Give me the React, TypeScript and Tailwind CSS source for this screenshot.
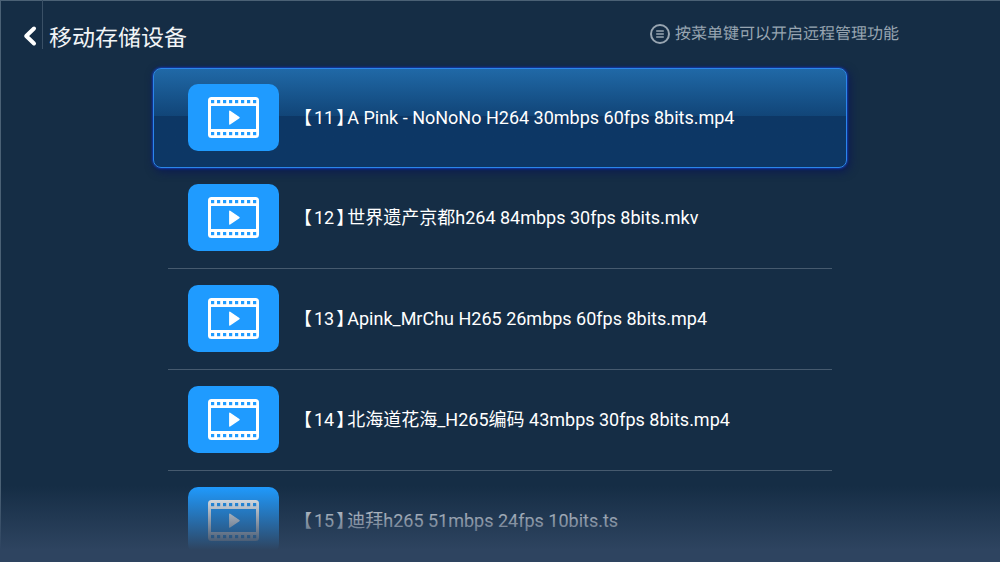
import clsx from "clsx"

const files = [
  { no: 11, name: "A Pink - NoNoNo H264 30mbps 60fps 8bits.mp4" },
  { no: 12, name: "世界遗产京都h264 84mbps 30fps 8bits.mkv" },
  { no: 13, name: "Apink_MrChu H265 26mbps 60fps 8bits.mp4" },
  { no: 14, name: "北海道花海_H265编码 43mbps 30fps 8bits.mp4" },
  { no: 15, name: "迪拜h265 51mbps 24fps 10bits.ts" },
]

const holes = [0, 1, 2, 3, 4, 5, 6, 7]

function FilmIcon() {
  return (
    <svg width="51" height="41" viewBox="0 0 51 41" aria-hidden="true">
      <rect width="51" height="41" rx="3.5" fill="#fff" />
      <rect x="3" y="9" width="45" height="23" fill="#1f9bff" />
      {holes.map((i) => (
        <g key={i} fill="#1f9bff">
          <rect x={3 + i * 6} y="3" width="3.2" height="3.2" />
          <rect x={3 + i * 6} y="35" width="3.2" height="3.2" />
        </g>
      ))}
      <path d="M21.8 14.2 31 20.6 21.8 27Z" fill="#fff" stroke="#fff" strokeWidth="1.4" strokeLinejoin="round" />
    </svg>
  )
}

function MenuIcon() {
  return (
    <svg width="20" height="20" viewBox="0 0 20 20" fill="none" stroke="currentColor" aria-hidden="true">
      <circle cx="10" cy="10" r="9" strokeWidth="2" />
      <path d="M6.2 7h7.6M6.2 10h7.6M6.2 13h7.6" strokeWidth="1.3" />
    </svg>
  )
}

export default function App() {
  return (
    <div className="relative flex h-screen flex-col overflow-hidden bg-[#152d45] font-['Roboto','Noto_Sans_CJK_SC',sans-serif] text-white shadow-[inset_1px_1px_0_#4b6175] [text-rendering:geometricPrecision]">
      <header className="flex h-[68px] shrink-0 items-start">
        <button type="button" aria-label="返回" className="mt-6 ml-[23px] h-6 w-[14px]">
          <svg width="14" height="24" viewBox="0 0 14 24" fill="none" stroke="#fff" strokeWidth="4" strokeLinejoin="round" strokeLinecap="round" aria-hidden="true">
            <path d="M11 4.5 3.2 12 11 19.5" />
          </svg>
        </button>
        <div className="ml-[5px] h-[49px] w-px bg-[#3a5066]" />
        <h1 className="mt-[23px] ml-[6px] text-[23px] leading-8 text-[#f2f5f7]">移动存储设备</h1>
        <p className="mt-6 mr-[101px] ml-auto flex items-center gap-[5px] text-base leading-5 text-[#98a5b1]">
          <MenuIcon />
          按菜单键可以开启远程管理功能
        </p>
      </header>

      <ul className="mx-auto w-full max-w-[694px]">
        {files.map((file, i) => (
          <li key={file.no}>
            <button
              type="button"
              className={clsx(
                "flex w-full text-left",
                i === 0
                  ? "h-[100px] rounded-lg border border-[#2b86ea] bg-linear-to-b from-[#2069a7] from-0% via-[#114578] via-48% to-[#0d3765] to-48% px-[34px] pt-[15px] shadow-[0_0_2px_1px_#1238a8,2px_3px_8px_1px_#0c1b52]"
                  : "h-[101px] px-[15px]"
              )}
            >
              <span
                className={clsx(
                  "flex grow items-start",
                  i > 0 && "h-[101px] border-b border-[#465a6e] px-5 pt-4"
                )}
              >
                <span className="flex h-[67px] w-[91px] shrink-0 items-center justify-center rounded-[10px] bg-[#1f9bff]">
                  <FilmIcon />
                </span>
                {/* half-width brackets around the number */}
                <span className="ml-6 flex text-lg leading-[67px] whitespace-nowrap">
                  <span className="[font-feature-settings:'halt']">【</span>
                  <span className="px-0.5">{file.no}</span>
                  <span className="[font-feature-settings:'halt']">】</span>
                  <span className="pl-0.5">{file.name}</span>
                </span>
              </span>
            </button>
          </li>
        ))}
      </ul>

      <div className="pointer-events-none absolute inset-x-0 bottom-0 h-20 bg-linear-to-b from-[#2e4460]/0 from-5% to-[#2e4460] to-85%" />
    </div>
  )
}
